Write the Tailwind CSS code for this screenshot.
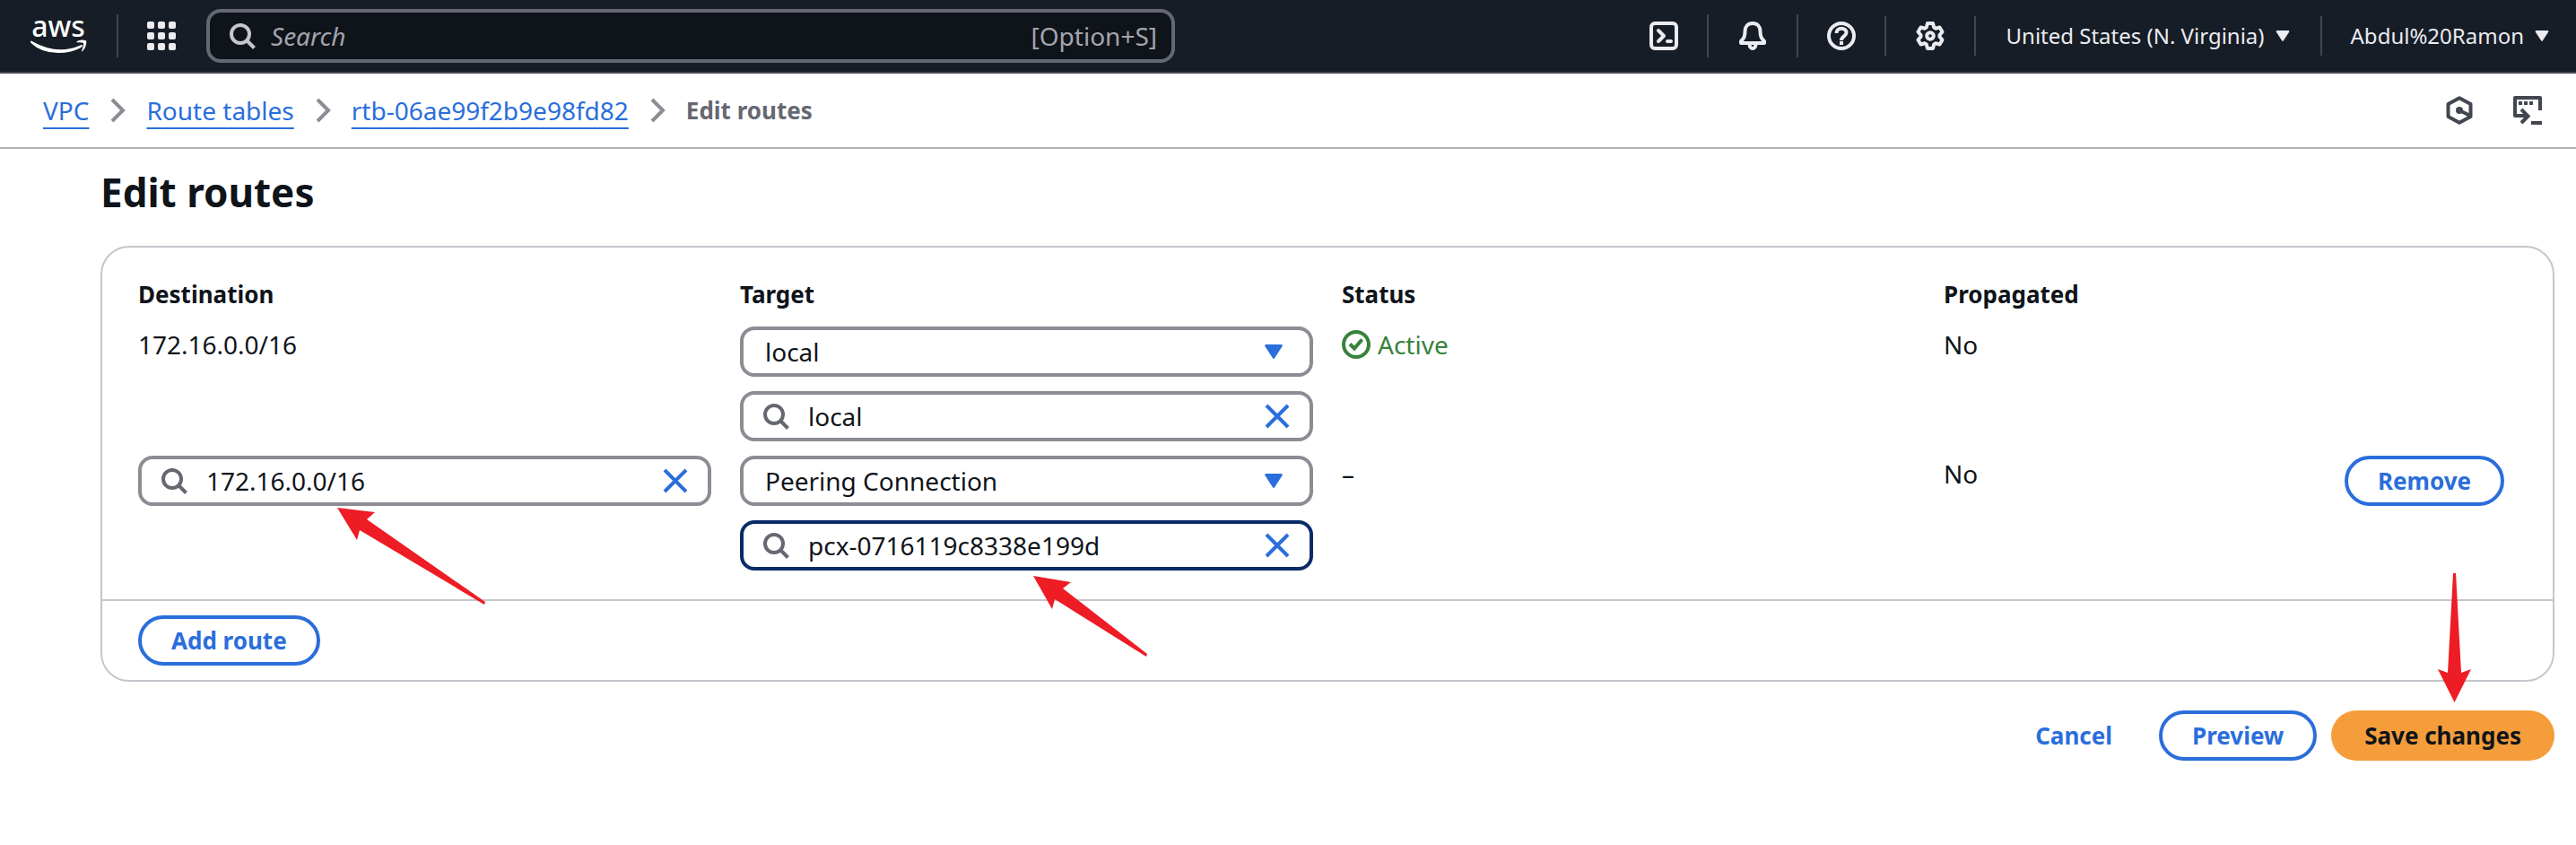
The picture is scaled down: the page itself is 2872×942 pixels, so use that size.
<!DOCTYPE html>
<html lang="en">
<head>
<meta charset="utf-8">
<meta name="viewport" content="width=device-width, initial-scale=1">
<title>Edit routes | VPC Console</title>
<script src="https://cdn.jsdelivr.net/npm/@tailwindcss/browser@4"></script>
</head>
<body class="bg-white font-['Noto_Sans','Open_Sans',sans-serif] text-[28px] leading-10 text-[#0f141a]">

<svg class="hidden" aria-hidden="true">
  <symbol id="search" viewBox="0 0 32 32"><g fill="none" stroke="currentColor" stroke-width="4"><circle cx="14" cy="14" r="10"/><path d="M21 21l8.500 8.500"/></g></symbol>
  <symbol id="close" viewBox="0 0 32 32"><path d="M4 4l24 24M28 4L4 28" fill="none" stroke="currentColor" stroke-width="4"/></symbol>
  <symbol id="caret" viewBox="0 0 20 16"><path d="M2 0h16q2.500 0 1.500 2.200L11.200 15q-1.200 1.800-2.400 0L.5 2.200Q-.5 0 2 0z" fill="currentColor"/></symbol>
  <symbol id="chevron" viewBox="0 0 32 32"><path d="M10 4l12 12-12 12" fill="none" stroke="currentColor" stroke-width="4"/></symbol>
</svg>

<header class="flex h-[82px] items-center border-b-2 border-[#424650] bg-[#161d26] pr-[30px] pl-[34px] text-[#ebebf0]">
  <a href="#" aria-label="AWS home" class="shrink-0">
    <svg class="h-[60px] w-16 overflow-visible" viewBox="0 0 64 60" fill="#fff">
      <text x="31" y="31" text-anchor="middle" font-family="Noto Sans" font-size="32" font-weight="500">aws</text>
      <path d="M0 36.500q0-1.500 1.800-.5Q30 52 55.500 40.500q2.500-1 2.800.5Q58 42 55 43.800 45 49 31 49 12 49 .5 38z"/>
      <path d="M51.500 36.300q4-2.800 10-1.300 1 .3.800 2.600Q61.800 43.500 58 47q-1.300.8-1-.6 2.600-6 2-8.200-.8-1.300-6.800-.9-1.500 0-.7-1z"/>
    </svg>
  </a>
  <span class="ml-8 h-12 w-0.5 shrink-0 bg-[#424650]"></span>
  <button type="button" aria-label="Services" class="mr-[34px] ml-8 shrink-0">
    <svg class="size-8" viewBox="0 0 32 32" fill="currentColor"><rect width="8" height="8" rx="2"/><rect x="12" width="8" height="8" rx="2"/><rect x="24" width="8" height="8" rx="2"/><rect y="12" width="8" height="8" rx="2"/><rect x="12" y="12" width="8" height="8" rx="2"/><rect x="24" y="12" width="8" height="8" rx="2"/><rect y="24" width="8" height="8" rx="2"/><rect x="12" y="24" width="8" height="8" rx="2"/><rect x="24" y="24" width="8" height="8" rx="2"/></svg>
  </button>
  <label class="flex h-[60px] w-[1080px] min-w-0 items-center rounded-2xl border-4 border-[#656871] bg-[#0f141a] pr-4 pl-5">
    <svg class="size-8 shrink-0 text-[#c6c6cd]"><use href="#search"/></svg>
    <input type="search" aria-label="Search" placeholder="Search" class="ml-4 min-w-0 flex-1 bg-transparent outline-none placeholder:text-[#a4a4ad] placeholder:italic">
    <span class="text-[#a4a4ad]">[Option+S]</span>
  </label>
  <nav class="ml-auto flex shrink-0 items-center text-2xl">
    <button type="button" aria-label="CloudShell" class="mr-8">
      <svg class="size-8" viewBox="0 0 32 32" fill="none" stroke="currentColor" stroke-width="4" stroke-linejoin="round" stroke-linecap="round"><rect x="2" y="2" width="28" height="28" rx="4"/><path d="M10 10l6 6-6 6M20 22h4"/></svg>
    </button>
    <span class="h-12 w-0.5 bg-[#424650]"></span>
    <button type="button" aria-label="Notifications" class="mx-8">
      <svg class="h-8 w-[34px]" viewBox="-1 0 34 32" fill="none" stroke="currentColor" stroke-width="4" stroke-linejoin="round"><path d="M16 2c-5.500 0-8.500 4-8.500 9 0 6-1.500 8-4.500 11v2h26v-2c-3-3-4.500-5-4.500-11 0-5-3-9-8.500-9z"/><path d="M12.500 25c0 3 1.500 5 3.500 5s3.500-2 3.500-5"/></svg>
    </button>
    <span class="h-12 w-0.5 bg-[#424650]"></span>
    <button type="button" aria-label="Help" class="mx-8">
      <svg class="size-8" viewBox="0 0 32 32" fill="none" stroke="currentColor" stroke-width="4"><circle cx="16" cy="16" r="14"/><path d="M10.500 13c0-3.300 2.300-5.300 5.500-5.300s5.500 2 5.500 4.600c0 4.200-5.500 4-5.500 8.700M16 22v4"/></svg>
    </button>
    <span class="h-11 w-0.5 bg-[#424650]"></span>
    <button type="button" aria-label="Settings" class="mx-8">
      <svg class="h-8 w-[34px]" viewBox="-1 0 34 32" fill="none" stroke="currentColor" stroke-width="4" stroke-linejoin="round"><path d="M13 2h6l1.200 4.500 2 1.200L26.500 6.500l3 5L26.500 15v2l3 3.500-3 5-4.300-1.200-2 1.200L19 30h-6l-1.200-4.500-2-1.200-4.300 1.200-3-5L5.500 17v-2l-3-3.500 3-5 4.300 1.200 2-1.200z"/><circle cx="16" cy="16" r="3.800"/></svg>
    </button>
    <span class="h-11 w-0.5 bg-[#424650]"></span>
    <button type="button" class="mx-[34px] flex items-center gap-3">United States (N. Virginia)<svg class="h-3 w-4"><use href="#caret"/></svg></button>
    <span class="h-11 w-0.5 bg-[#424650]"></span>
    <button type="button" class="ml-8 flex items-center gap-3">Abdul%20Ramon<svg class="h-3 w-4"><use href="#caret"/></svg></button>
  </nav>
</header>

<div class="flex h-[84px] items-center border-b-2 border-[#b4b4bb] px-12 pr-[38px] text-[#424650]">
  <nav aria-label="Breadcrumb">
    <ol class="flex items-center gap-4 text-[#8c8c94]">
      <li><a href="#" class="text-[#2a6edb] underline decoration-2 underline-offset-8">VPC</a></li>
      <li aria-hidden="true"><svg class="size-8"><use href="#chevron"/></svg></li>
      <li><a href="#" class="text-[#2a6edb] underline decoration-2 underline-offset-8">Route tables</a></li>
      <li aria-hidden="true"><svg class="size-8"><use href="#chevron"/></svg></li>
      <li><a href="#" class="text-[#2a6edb] underline decoration-2 underline-offset-8">rtb-06ae99f2b9e98fd82</a></li>
      <li aria-hidden="true"><svg class="size-8"><use href="#chevron"/></svg></li>
      <li aria-current="page" class="text-[26px] font-bold text-[#656871]">Edit routes</li>
    </ol>
  </nav>
  <button type="button" aria-label="Tutorials" class="ml-auto">
    <svg class="size-8" viewBox="0 0 32 32" fill="none" stroke="currentColor" stroke-width="4"><path d="M16 2.300l12.500 6.700v14L16 29.700 3.500 23V9z" stroke-linejoin="round"/><path d="M16 16l12 6"/><circle cx="16" cy="16" r="4" fill="currentColor" stroke="none"/></svg>
  </button>
  <button type="button" aria-label="Open CloudShell panel" class="ml-11">
    <svg class="size-8" viewBox="0 0 32 32" fill="none" stroke="currentColor" stroke-width="4"><path d="M30 16V2H2v20h14" stroke-linejoin="round"/><path d="M9 15l7.500 7.500L9 30M20 30h12"/><path d="M6 8h4M12 8h4M18 8h4"/></svg>
  </button>
</div>

<main class="pt-[18px] pr-6 pb-20 pl-28">
  <h1 class="text-[44px] leading-[60px] font-bold">Edit routes</h1>

  <form>
    <section class="mt-[30px] rounded-[32px] border-2 border-[#c6c6cd]">
      <div class="px-10 pt-8 pb-4">
        <table class="w-[calc(100%+32px)] table-fixed text-left">
          <colgroup><col class="w-1/4"><col class="w-1/4"><col class="w-1/4"><col class="w-1/8"><col class="w-1/8"></colgroup>
          <thead class="text-[26px]">
            <tr>
              <th scope="col" class="pb-4 font-bold">Destination</th>
              <th scope="col" class="pb-4 font-bold">Target</th>
              <th scope="col" class="pb-4 font-bold">Status</th>
              <th scope="col" class="pb-4 font-bold">Propagated</th>
              <td></td>
            </tr>
          </thead>
          <tbody>
            <tr class="align-top">
              <td>172.16.0.0/16</td>
              <td class="pr-8 pb-4">
                <div class="flex flex-col gap-4">
                  <div class="relative">
                    <select aria-label="Target type for 172.16.0.0/16" class="block h-14 w-full appearance-none rounded-2xl border-4 border-[#8c8c94] bg-white px-6"><option>local</option></select>
                    <svg class="pointer-events-none absolute top-5 right-[34px] h-4 w-5 text-[#2a6edb]"><use href="#caret"/></svg>
                  </div>
                  <div class="flex h-14 items-center rounded-2xl border-4 border-[#8c8c94] pr-5 pl-5 text-[#656871]">
                    <svg class="size-8 shrink-0"><use href="#search"/></svg>
                    <input type="text" value="local" aria-label="Target for 172.16.0.0/16" class="ml-5 h-10 min-w-0 flex-1 text-[#0f141a] outline-none">
                    <button type="button" aria-label="Clear target" class="text-[#2a6edb]"><svg class="size-8"><use href="#close"/></svg></button>
                  </div>
                </div>
              </td>
              <td>
                <span class="flex items-center gap-2 text-[#37823a]">
                  <svg class="size-8" viewBox="0 0 32 32" fill="none" stroke="currentColor" stroke-width="4"><circle cx="16" cy="16" r="14"/><path d="M9 15.500l5 5 8.500-10"/></svg>Active
                </span>
              </td>
              <td>No</td>
              <td></td>
            </tr>
            <tr class="align-top">
              <td class="pr-8">
                <div class="relative">
                  <div class="flex h-14 items-center rounded-2xl border-4 border-[#8c8c94] pr-5 pl-5 text-[#656871]">
                    <svg class="size-8 shrink-0"><use href="#search"/></svg>
                    <input type="text" value="172.16.0.0/16" aria-label="Destination" class="ml-5 h-10 min-w-0 flex-1 text-[#0f141a] outline-none">
                    <button type="button" aria-label="Clear destination" class="text-[#2a6edb]"><svg class="size-8"><use href="#close"/></svg></button>
                  </div>
                  <svg class="pointer-events-none absolute top-[58px] left-[222px] h-[108px] w-[166px]" viewBox="0 0 166 108" fill="#ee1c25"><path d="M0 0l42 5-9 8 132 92-1 3L25 25l-3 11z"/></svg>
                </div>
              </td>
              <td class="pr-8 pb-4">
                <div class="flex flex-col gap-4">
                  <div class="relative">
                    <select aria-label="Target type for new route" class="block h-14 w-full appearance-none rounded-2xl border-4 border-[#8c8c94] bg-white px-6"><option>Peering Connection</option></select>
                    <svg class="pointer-events-none absolute top-5 right-[34px] h-4 w-5 text-[#2a6edb]"><use href="#caret"/></svg>
                  </div>
                  <div class="relative">
                    <div class="flex h-14 items-center rounded-2xl border-4 border-[#0a2b66] pr-5 pl-5 text-[#656871]">
                      <svg class="size-8 shrink-0"><use href="#search"/></svg>
                      <input type="text" value="pcx-0716119c8338e199d" aria-label="Target for new route" class="ml-5 h-10 min-w-0 flex-1 text-[#0f141a] outline-none">
                      <button type="button" aria-label="Clear target" class="text-[#2a6edb]"><svg class="size-8"><use href="#close"/></svg></button>
                    </div>
                    <svg class="pointer-events-none absolute top-[62px] left-[327px] h-[90px] w-32" viewBox="0 0 128 90" fill="#ee1c25"><path d="M0 0l42 7-9 7 94 73-1 3L24 26l-3 11z"/></svg>
                  </div>
                </div>
              </td>
              <td>–</td>
              <td>No</td>
              <td class="pr-[46px] text-right"><button type="button" class="h-14 rounded-full border-4 border-[#2a6edb] px-[33px] text-[26px] leading-10 font-bold text-[#2a6edb]">Remove</button></td>
            </tr>
          </tbody>
        </table>
      </div>
      <div class="flex border-t-2 border-[#c6c6cd] px-10 py-4">
        <button type="button" class="h-14 rounded-full border-4 border-[#2a6edb] px-[33px] text-[26px] leading-10 font-bold text-[#2a6edb]">Add route</button>
      </div>
    </section>

    <div class="mt-8 flex justify-end gap-4 text-[26px]">
      <a href="#" class="flex h-14 items-center px-9 font-bold text-[#2a6edb]">Cancel</a>
      <button type="button" class="h-14 rounded-full border-4 border-[#2a6edb] px-[33px] leading-10 font-bold text-[#2a6edb]">Preview</button>
      <div class="relative">
        <button type="submit" class="h-14 rounded-full bg-[#f59d3a] px-[37px] font-bold">Save changes</button>
        <svg class="pointer-events-none absolute right-[93px] bottom-[65px] h-36 w-[37px]" viewBox="0 0 37 144" fill="#ee1c25"><path d="M17 0h3l6 111 11-4-18.500 37L0 107l11 4z"/></svg>
      </div>
    </div>
  </form>
</main>
</body>
</html>
